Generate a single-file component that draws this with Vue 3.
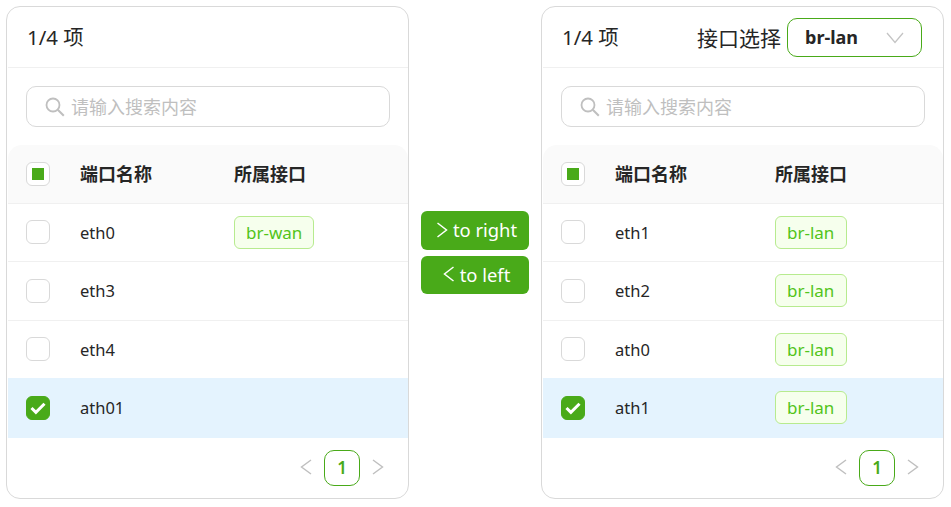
<script setup>
const panels = [
  {
    side: 'left',
    rows: [
      { name: 'eth0', tag: 'br-wan' },
      { name: 'eth3' },
      { name: 'eth4' },
      { name: 'ath01', checked: true }
    ]
  },
  {
    side: 'right',
    select: true,
    rows: [
      { name: 'eth1', tag: 'br-lan' },
      { name: 'eth2', tag: 'br-lan' },
      { name: 'ath0', tag: 'br-lan' },
      { name: 'ath1', tag: 'br-lan', checked: true }
    ]
  }
]
</script>

<template>
  <div class="page">
    <template v-for="(panel, i) in panels" :key="panel.side">
      <section class="panel" :class="panel.side">
        <header class="head">
          <span class="count">1/4 项</span>
          <div v-if="panel.select" class="picker">
            <span class="picker-label">接口选择</span>
            <div class="select">
              <span class="select-value">br-lan</span>
              <svg class="select-arrow" width="18" height="12" viewBox="0 0 18 12"><path d="M1 1l8 9.5L17 1" fill="none" stroke="#c4c4c4" stroke-width="1.3"/></svg>
            </div>
          </div>
        </header>
        <div class="search-wrap">
          <div class="search">
            <svg class="search-icon" width="20" height="20" viewBox="0 0 20 20"><circle cx="8" cy="8" r="6.5" fill="none" stroke="#bfbfbf" stroke-width="1.8"/><path d="M12.8 12.8l6 6" stroke="#bfbfbf" stroke-width="2" fill="none"/></svg>
            <span class="placeholder">请输入搜索内容</span>
          </div>
        </div>
        <div class="table">
          <div class="row th">
            <span class="box partial"><i></i></span>
            <span class="cell-name">端口名称</span>
            <span class="cell-tag">所属接口</span>
          </div>
          <div v-for="row in panel.rows" :key="row.name" class="row td" :class="{ on: row.checked }">
            <span class="box" :class="{ checked: row.checked }">
              <svg v-if="row.checked" width="18" height="14" viewBox="0 0 18 14"><path d="M2.5 7l4.4 4.4L15.5 2.8" fill="none" stroke="#fff" stroke-width="3"/></svg>
            </span>
            <span class="cell-name">{{ row.name }}</span>
            <span class="cell-tag"><span v-if="row.tag" class="tag">{{ row.tag }}</span></span>
          </div>
        </div>
        <footer class="pager">
          <svg class="pager-arrow" width="14" height="18" viewBox="0 0 14 18"><path d="M12 2L2.5 9l9.5 7" fill="none" stroke="#bfbfbf" stroke-width="1.4"/></svg>
          <span class="page-num">1</span>
          <svg class="pager-arrow" width="14" height="18" viewBox="0 0 14 18"><path d="M2 2l9.5 7L2 16" fill="none" stroke="#bfbfbf" stroke-width="1.4"/></svg>
        </footer>
      </section>
      <div v-if="i === 0" class="ops">
        <button class="op">
          <svg width="12" height="16" viewBox="0 0 12 16"><path d="M1.5 1L10.5 8l-9 7" fill="none" stroke="#fff" stroke-width="1.5"/></svg>
          to right
        </button>
        <button class="op">
          <svg width="12" height="16" viewBox="0 0 12 16"><path d="M10.5 1L1.5 8l9 7" fill="none" stroke="#fff" stroke-width="1.5"/></svg>
          to left
        </button>
      </div>
    </template>
  </div>
</template>

<style>
html, body { margin: 0; background: #fff; }
</style>

<style scoped>
.page {
  display: flex;
  align-items: flex-start;
  width: 951px;
  height: 507px;
  padding: 6px 7px 0 6px;
  box-sizing: border-box;
  font-family: "Noto Sans", "Noto Sans CJK SC", sans-serif;
  color: #262626;
  overflow: hidden;
}
.panel {
  width: 403px;
  height: 493px;
  box-sizing: border-box;
  border: 1px solid #d9d9d9;
  border-radius: 14px;
  padding-left: 1px;
  display: flex;
  flex-direction: column;
  flex: none;
}
.head {
  height: 61px;
  box-sizing: border-box;
  border-bottom: 1px solid #f0f0f0;
  padding: 0 21px 0 19px;
  display: flex;
  align-items: center;
  justify-content: space-between;
}
.count { font-size: 20.4px; padding-bottom: 2px; }
.picker { display: flex; align-items: center; gap: 6px; }
.picker-label { font-size: 21px; }
.select {
  width: 135px;
  height: 39px;
  box-sizing: border-box;
  border: 1px solid #49aa19;
  border-radius: 10px;
  display: flex;
  align-items: center;
  justify-content: space-between;
  padding: 0 17px 0 17px;
}
.select-value { font-size: 18px; font-weight: 700; }
.select-arrow { margin-top: 1px; }
.search-wrap { padding: 18px 18px 18px 18px; }
.search {
  height: 41px;
  box-sizing: border-box;
  border: 1px solid #d9d9d9;
  border-radius: 10px;
  display: flex;
  align-items: center;
  padding-left: 18px;
  gap: 6px;
}
.placeholder { font-size: 18px; color: #bfbfbf; padding-bottom: 2px; }
.table { display: flex; flex-direction: column; }
.row {
  display: grid;
  align-items: center;
  padding-left: 18px;
  box-sizing: border-box;
}
.left .row { grid-template-columns: 54px 154px 1fr; }
.right .row { grid-template-columns: 54px 160px 1fr; }
.th {
  height: 58.5px;
  background: #fafafa;
  border-bottom: 1px solid #f0f0f0;
  border-radius: 14px 14px 0 0;
  font-weight: 700;
  font-size: 18px;
}
.th .cell-name, .th .cell-tag { padding-bottom: 2px; }
.td {
  height: 58.5px;
  border-bottom: 1px solid #f0f0f0;
  font-size: 16.5px;
}
.td:has(+ .on) { border-bottom-color: #e4f3fe; }
.td.on { background: #e4f3fe; border-bottom-color: transparent; }
.box {
  width: 24px;
  height: 24px;
  box-sizing: border-box;
  border: 1px solid #d9d9d9;
  border-radius: 6px;
  background: #fff;
  display: flex;
  align-items: center;
  justify-content: center;
}
.box.partial i { width: 12px; height: 12px; background: #49aa19; display: block; }
.box.checked { background: #49aa19; border-color: #49aa19; }
.tag {
  display: inline-block;
  height: 33px;
  line-height: 31px;
  box-sizing: border-box;
  padding: 0 11px;
  border: 1px solid #b7eb8f;
  border-radius: 6px;
  background: #f6ffed;
  color: #52c41a;
  font-size: 17px;
}
.right .tag { padding-right: 12px; }
.pager {
  flex: 1;
  display: flex;
  align-items: center;
  justify-content: flex-end;
  gap: 11px;
  padding-right: 23px;
}
.pager-arrow { margin-bottom: 2px; }
.page-num {
  width: 36px;
  height: 36px;
  box-sizing: border-box;
  border: 1px solid #49aa19;
  border-radius: 10px;
  color: #49aa19;
  font-size: 17px;
  font-weight: 600;
  display: flex;
  align-items: center;
  justify-content: center;
}
.ops {
  width: 132px;
  flex: none;
  padding-top: 205px;
  display: flex;
  flex-direction: column;
  align-items: center;
  gap: 6px;
}
.op {
  width: 108px;
  height: 39px;
  border: 0;
  border-radius: 6px;
  background: #49aa19;
  color: #fff;
  font: 18.4px "Noto Sans", sans-serif;
  padding: 0 0 2px 3px;
  display: flex;
  align-items: center;
  justify-content: center;
  gap: 5px;
}
.op + .op { height: 38px; }
</style>
